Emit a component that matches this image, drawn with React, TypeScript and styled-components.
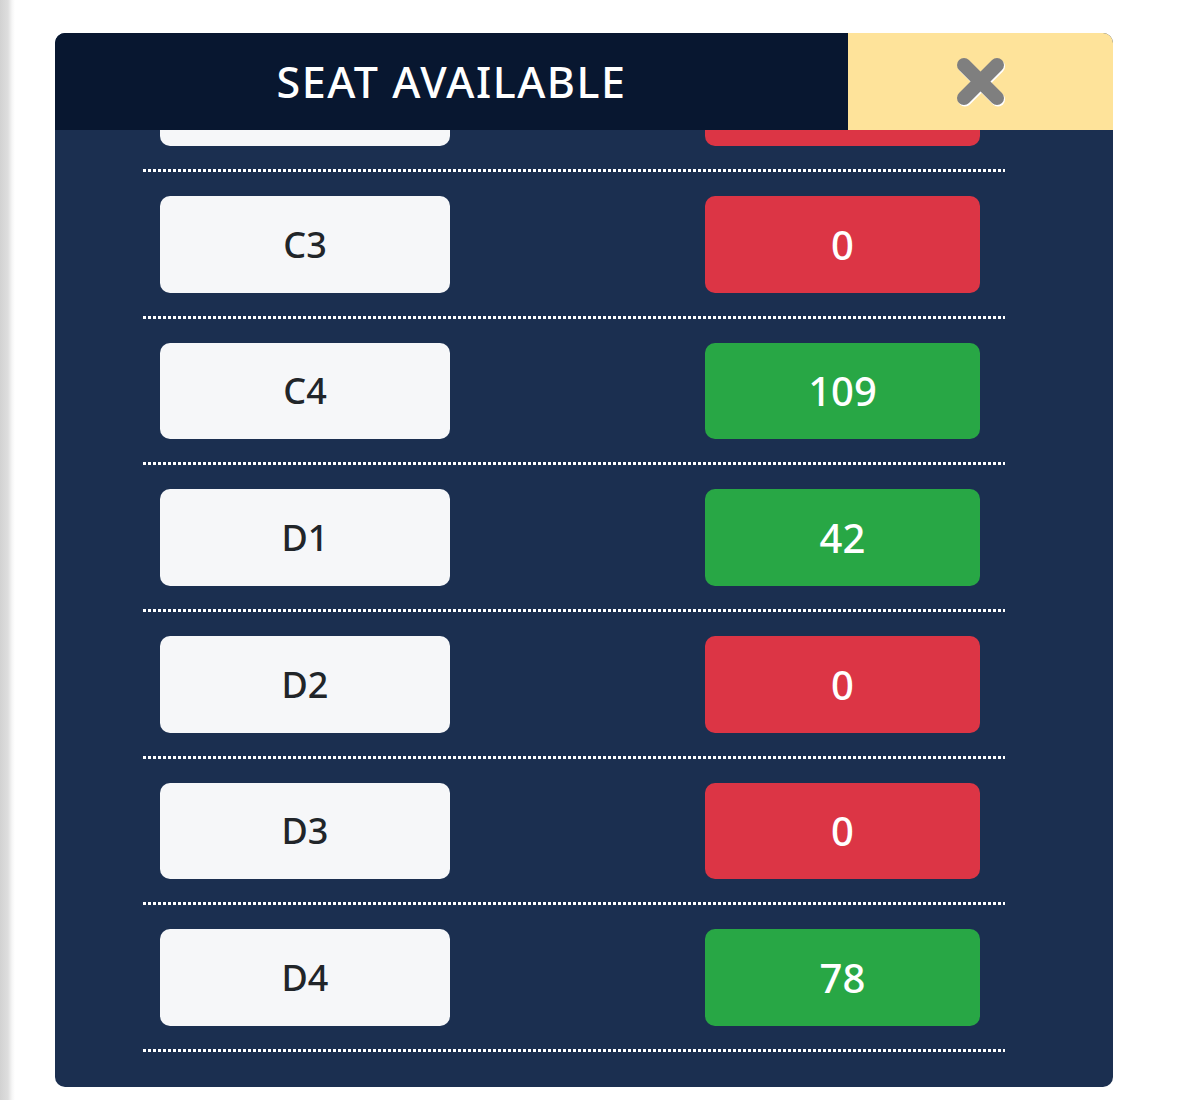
import React, { useLayoutEffect, useRef } from 'react'
import styled, { createGlobalStyle } from 'styled-components'

const GlobalStyle = createGlobalStyle`
  html, body {
    margin: 0;
    padding: 0;
  }
  body {
    font-family: 'Noto Sans', 'Open Sans', sans-serif;
    background: linear-gradient(to right, #d2d2d2 0, #dedede 8px, #f6f6f6 12px, #ffffff 15px);
    min-height: 1100px;
  }
`

interface Seat {
  zone: string
  available: number
}

const seats: Seat[] = [
  { zone: 'B4', available: 0 },
  { zone: 'C1', available: 0 },
  { zone: 'C2', available: 0 },
  { zone: 'C3', available: 0 },
  { zone: 'C4', available: 109 },
  { zone: 'D1', available: 42 },
  { zone: 'D2', available: 0 },
  { zone: 'D3', available: 0 },
  { zone: 'D4', available: 78 },
]

const Page = styled.div`
  padding: 33px 0 0 55px;
`

const Modal = styled.div`
  width: 1058px;
  height: 1054px;
  border-radius: 10px;
  overflow: hidden;
  background: #1b2f50;
  display: flex;
  flex-direction: column;
`

const Header = styled.div`
  display: flex;
  height: 97px;
  flex: 0 0 auto;
`

const Title = styled.div`
  flex: 1 1 auto;
  background: #081730;
  color: #ffffff;
  font-size: 43px;
  font-weight: 500;
  letter-spacing: 1.5px;
  display: flex;
  align-items: center;
  justify-content: center;
`

const CloseButton = styled.button`
  width: 265px;
  flex: 0 0 auto;
  border: none;
  padding: 0;
  background: #fee39a;
  display: flex;
  align-items: center;
  justify-content: center;
  cursor: pointer;
`

const Body = styled.div`
  flex: 1 1 auto;
  overflow-y: auto;
  scrollbar-width: none;
  padding: 0 108px 35px 88px;
  &::-webkit-scrollbar {
    display: none;
  }
`

const Row = styled.div`
  display: flex;
  justify-content: space-between;
  padding: 24px 25px 26px 17px;
  background: repeating-linear-gradient(to right, #ffffff 0 3px, transparent 3px 5px) left bottom / 100% 3px no-repeat;
`

const Box = styled.div`
  height: 96.67px;
  border-radius: 10px;
  display: flex;
  align-items: center;
  justify-content: center;
`

const ZoneBox = styled(Box)`
  width: 290px;
  background: #f6f7f9;
  color: #212529;
  font-size: 36px;
  font-weight: 500;
`

const CountBox = styled(Box)<{ $empty: boolean }>`
  width: 275px;
  background: ${(p) => (p.$empty ? '#dc3545' : '#28a745')};
  color: #ffffff;
  font-size: 40px;
  font-weight: 500;
`

const CloseIcon = () => (
  <svg width="54" height="54" viewBox="0 0 54 54">
    <g strokeLinecap="round" strokeWidth="14">
      <line x1="10" y1="10" x2="43" y2="43" stroke="#ffffff" transform="translate(1 1.5)" />
      <line x1="43" y1="10" x2="10" y2="43" stroke="#ffffff" transform="translate(1 1.5)" />
      <line x1="10" y1="10" x2="43" y2="43" stroke="#7f7f7f" />
      <line x1="43" y1="10" x2="10" y2="43" stroke="#7f7f7f" />
    </g>
  </svg>
)

export default function App() {
  const bodyRef = useRef<HTMLDivElement>(null)

  useLayoutEffect(() => {
    // list shown scrolled to the end
    if (bodyRef.current) {
      bodyRef.current.scrollTop = bodyRef.current.scrollHeight
    }
  }, [])

  return (
    <>
      <GlobalStyle />
      <Page>
        <Modal>
          <Header>
            <Title>SEAT AVAILABLE</Title>
            <CloseButton aria-label="close">
              <CloseIcon />
            </CloseButton>
          </Header>
          <Body ref={bodyRef}>
            {seats.map((s) => (
              <Row key={s.zone}>
                <ZoneBox>{s.zone}</ZoneBox>
                <CountBox $empty={s.available === 0}>{s.available}</CountBox>
              </Row>
            ))}
          </Body>
        </Modal>
      </Page>
    </>
  )
}
